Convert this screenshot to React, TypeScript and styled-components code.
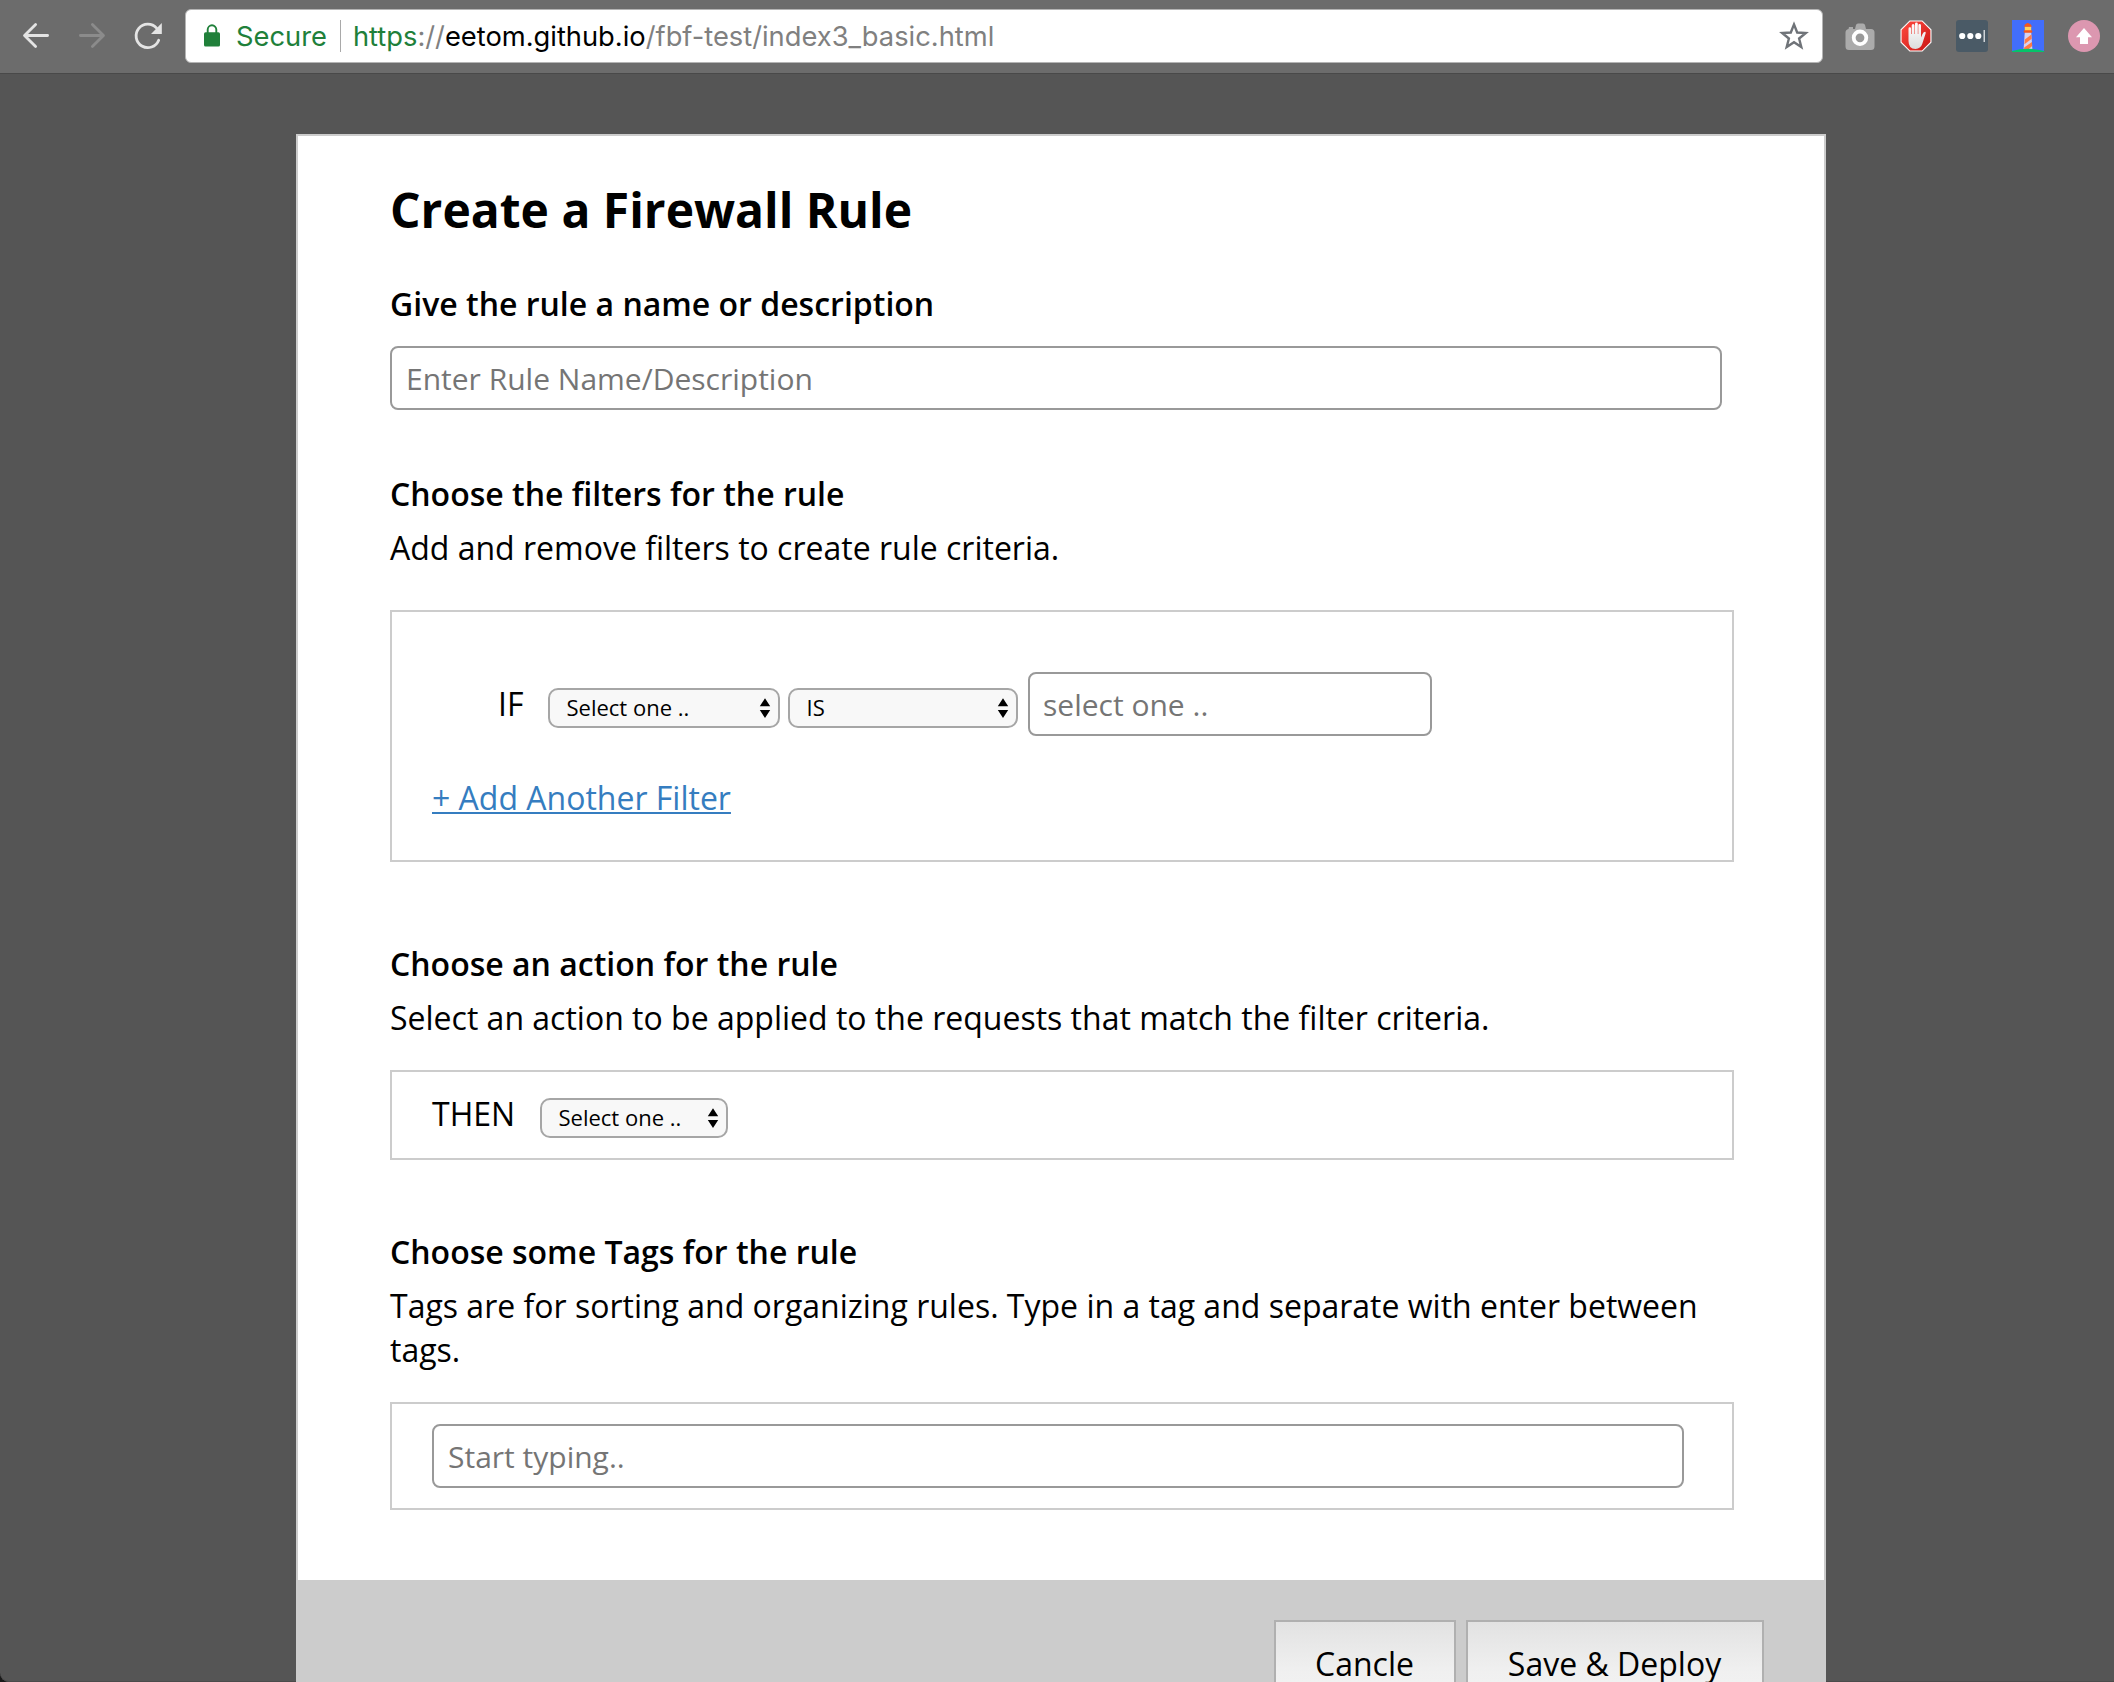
import React from "react";
import styled, { createGlobalStyle } from "styled-components";

const GlobalStyle = createGlobalStyle`
  *, *::before, *::after { box-sizing: border-box; }
  html, body { margin: 0; padding: 0; background: #1a1a1a; }
  body { height: 1682px; overflow: hidden; }
`;

const Window = styled.div`
  width: 2114px;
  height: 1682px;
  display: flex;
  flex-direction: column;
  overflow: hidden;
  background: #555;
  border-radius: 0 0 0 9px;
  box-shadow: inset 0 -1px 0 #4b4b4b;
  font-family: "Open Sans", "Liberation Sans", sans-serif;
  color: #000;
`;

const Toolbar = styled.header`
  flex: none;
  height: 74px;
  display: flex;
  align-items: flex-start;
  background: #6c6c6c;
  border-bottom: 1px solid #494949;
`;

const NavButtons = styled.nav`
  display: flex;
  gap: 24px;
  padding: 20px 20px 0 20px;
  width: 185px;
  svg { display: block; flex: none; }
`;

const Omnibox = styled.div`
  width: 1638px;
  height: 54px;
  margin-top: 9px;
  padding: 0 13px 0 17px;
  display: flex;
  align-items: center;
  background: #fff;
  border: 1px solid #b4b4b4;
  border-radius: 6px;
  font-family: Inter, "Liberation Sans", sans-serif;
  font-size: 27.3px;
  line-height: 34px;
  white-space: nowrap;
`;

const Secure = styled.span`
  margin-left: 15px;
  padding-top: 2px;
  color: #20803a;
`;

const Divider = styled.span`
  width: 1px;
  height: 32px;
  margin: 0 12px 0 13px;
  background: #a9a9a9;
`;

const Url = styled.span`
  flex: 1;
  padding-top: 2px;
  color: #000;
`;

const Scheme = styled.span`
  color: #20803a;
`;

const Muted = styled.span`
  color: #808080;
`;

const Extensions = styled.div`
  display: flex;
  gap: 24px;
  padding: 20px 0 0 21px;
  svg { display: block; flex: none; }
`;

const Page = styled.main`
  flex: 1;
  min-height: 0;
  padding: 60px 0 0 296px;
`;

const Modal = styled.section`
  width: 1530px;
  display: flex;
  flex-direction: column;
  background: #fff;
  border: 2px solid #ccc;
`;

const Body = styled.div`
  height: 1444px;
  padding: 41px 90px 0 92px;
  display: flex;
  flex-direction: column;
`;

const Title = styled.h1`
  margin: 0 0 39px;
  font-size: 48px;
  line-height: 66px;
  font-weight: 700;
`;

const Section = styled.section<{ $after: number }>`
  display: flex;
  flex-direction: column;
  margin-bottom: ${(p) => p.$after}px;
`;

const Heading = styled.h2`
  margin: 0;
  font-size: 32px;
  line-height: 44px;
  font-weight: 600;
`;

const Description = styled.p`
  margin: 10px 0 0;
  font-size: 32px;
  line-height: 44px;
`;

const TextInput = styled.input<{ $width: number; $inset?: number }>`
  width: ${(p) => p.$width}px;
  height: 64px;
  margin: 0;
  padding: 0 ${(p) => p.$inset ?? 14}px;
  border: 2px solid #999;
  border-radius: 8px;
  background: #fff;
  font-family: inherit;
  font-size: 30px;
  color: #000;
  outline: none;
  &::placeholder { color: #757575; opacity: 1; }
`;

const NameInput = styled(TextInput)`
  margin-top: 20px;
`;

const Panel = styled.div<{ $top: number; $height: number }>`
  margin-top: ${(p) => p.$top}px;
  height: ${(p) => p.$height}px;
  padding: 0 40px;
  display: flex;
  flex-direction: column;
  border: 2px solid #ccc;
`;

const FilterRow = styled.div`
  display: flex;
  align-items: center;
  margin-top: 60px;
  padding-left: 66px;
`;

const ActionRow = styled.div`
  display: flex;
  align-items: flex-start;
  margin-top: 20px;
`;

const TagRow = styled.div`
  display: flex;
  margin-top: 20px;
`;

const Keyword = styled.span<{ $width: number }>`
  width: ${(p) => p.$width}px;
  font-size: 32px;
  line-height: 44px;
`;

const SelectBox = styled.span<{ $width: number; $gap: number; $top: number }>`
  position: relative;
  display: block;
  width: ${(p) => p.$width}px;
  height: 40px;
  margin: ${(p) => p.$top}px ${(p) => p.$gap}px 0 0;
`;

const NativeSelect = styled.select`
  appearance: none;
  display: block;
  width: 100%;
  height: 40px;
  margin: 0;
  padding: 0 30px 2px 16.5px;
  border: 2px solid #a6a6a6;
  border-radius: 10px;
  background: #f8f8f8;
  font-family: inherit;
  font-size: 22px;
  color: #000;
`;

const Arrows = styled.svg`
  position: absolute;
  right: 9px;
  top: 10px;
  pointer-events: none;
`;

const AddLink = styled.a`
  align-self: flex-start;
  margin-top: 40px;
  font-size: 32px;
  line-height: 44px;
  color: #357dc0;
  text-decoration: underline;
  text-decoration-thickness: 2px;
  text-underline-offset: 2px;
`;

const Footer = styled.footer`
  height: 120px;
  padding: 40px 60px 0 0;
  display: flex;
  justify-content: flex-end;
  gap: 10px;
  background: #ccc;
`;

const FooterButton = styled.button<{ $width: number }>`
  width: ${(p) => p.$width}px;
  height: 90px;
  margin: 0;
  padding: 20px 1px 0 0;
  display: flex;
  align-items: flex-start;
  justify-content: center;
  border: 2px solid #b0b0b0;
  background: linear-gradient(#e2e2e2, #f0f0f0 50px, #f4f4f4);
  font-family: inherit;
  font-size: 32px;
  line-height: 44px;
  color: #000;
`;

function Select({ width, gap = 0, top, label }: { width: number; gap?: number; top: number; label: string }) {
  return (
    <SelectBox $width={width} $gap={gap} $top={top}>
      <NativeSelect defaultValue={label}>
        <option>{label}</option>
      </NativeSelect>
      <Arrows width="12" height="20" viewBox="0 0 12 20">
        <path d="M6 0.3 11.2 8.3H0.8ZM6 20 0.8 12H11.2Z" fill="#000" />
      </Arrows>
    </SelectBox>
  );
}

function BackIcon() {
  return (
    <svg width="32" height="32" viewBox="0 0 32 32" fill="none" stroke="#e4e4e4" strokeWidth="2.8" strokeLinecap="round" strokeLinejoin="round">
      <path d="M27.6 15.5H4.8M15.6 4.4 4.5 15.5 15.6 26.6" />
    </svg>
  );
}

function ForwardIcon() {
  return (
    <svg width="32" height="32" viewBox="0 0 32 32" fill="none" stroke="#8b8b8b" strokeWidth="2.8" strokeLinecap="round" strokeLinejoin="round">
      <path d="M4.4 15.5H27.2M16.4 4.4 27.5 15.5 16.4 26.6" />
    </svg>
  );
}

function ReloadIcon() {
  return (
    <svg width="32" height="32" viewBox="0 0 32 32">
      <path d="M26.7 20.2A11.7 11.7 0 1 1 24.6 8.2" fill="none" stroke="#e4e4e4" strokeWidth="2.8" strokeLinecap="round" />
      <path d="M29.8 3V14H19Z" fill="#e4e4e4" />
    </svg>
  );
}

function LockIcon() {
  return (
    <svg width="18" height="24" viewBox="0 0 18 24">
      <path d="M4.7 9V5.6a4.3 4.3 0 0 1 8.6 0V9" fill="none" stroke="#20803a" strokeWidth="1.9" />
      <rect x="1" y="8.3" width="16" height="14.2" rx="1.6" fill="#20803a" />
    </svg>
  );
}

function StarIcon() {
  return (
    <svg width="30" height="30" viewBox="0 0 30 30">
      <path d="M15 3.4 18.2 11.5 26.8 12 20.1 17.5 22.3 26 15 21.2 7.7 26 9.9 17.5 3.2 12 11.8 11.5Z" fill="none" stroke="#6f7378" strokeWidth="2.4" />
    </svg>
  );
}

function CameraIcon() {
  return (
    <svg width="32" height="32" viewBox="0 0 32 32">
      <path d="M5 7h4v2h2l1-4q.4-1.500 2-1.500h5q1.600 0 2 1.500l1 4h5q3.500 0 3.500 3.500v14q0 3.500-3.500 3.500H5q-3.500 0-3.500-3.500V12.500Q1.500 9.500 4.500 9Z" fill="#ababab" />
      <circle cx="16" cy="17.800" r="6.300" fill="#999" stroke="#fff" strokeWidth="3.800" />
    </svg>
  );
}

function StopHandIcon() {
  return (
    <svg width="32" height="32" viewBox="0 0 32 32">
      <defs>
        <linearGradient id="stop" x1="0" y1="0" x2="1" y2="1">
          <stop offset="0" stopColor="#ff4b41" />
          <stop offset="1" stopColor="#c91612" />
        </linearGradient>
        <linearGradient id="palm" x1="0" y1="0" x2="0" y2="1">
          <stop offset="0" stopColor="#fff" />
          <stop offset="1" stopColor="#dcdcdc" />
        </linearGradient>
      </defs>
      <path d="M9.600.500H22.400L31.500 9.600V22.400L22.400 31.500H9.600L.500 22.400V9.600Z" fill="#fff" />
      <path d="M10 1.600H22L30.400 10V22L22 30.400H10L1.600 22V10Z" fill="url(#stop)" />
      <path d="M8.500 21V8.700q0-1.400 1.300-1.400t1.300 1.400V14l.600 0V5.500q0-1.500 1.400-1.500t1.400 1.500V14h.500V4q0-1.400 1.400-1.400T17.800 4V14h.5V5.500q0-1.400 1.300-1.400T21 5.500V17.500l1.500-3.500q1.200-2.300 2.700-2.200.8.200.4 1.600l-3.300 10.400Q20.600 28.900 15.500 28.900 8.500 28.900 8.500 21Z" fill="url(#palm)" />
    </svg>
  );
}

function PasswordIcon() {
  return (
    <svg width="32" height="32" viewBox="0 0 32 32">
      <rect width="32" height="32" rx="3" fill="#4a5a66" />
      <circle cx="6.200" cy="16" r="3.100" fill="#fff" />
      <circle cx="14.300" cy="16" r="3.100" fill="#fff" />
      <circle cx="22.300" cy="16" r="3.100" fill="#fff" />
      <rect x="27.500" y="10" width="1.500" height="12" fill="#cfd4d8" />
    </svg>
  );
}

function LighthouseIcon() {
  return (
    <svg width="32" height="32" viewBox="0 0 32 32">
      <rect width="32" height="32" fill="#426efb" />
      <path d="M12.800 12h6.400l1.200 17.500h-8.800Z" fill="#d6d2ee" />
      <path d="M12.900 19.500 19.400 14.500l.3 4.300-7.300 5.400ZM12.200 27.500l7.700-5.600.3 4.200-4 3.400h-4.200Z" fill="#ff7a45" />
      <rect x="12.800" y="6.500" width="6.400" height="4.500" fill="#ffd35c" />
      <path d="M12 6.800q.4-2.600 2.800-3.500.8-.7 1.900 0 2.600.9 3.300 3.500Z" fill="#f4581c" />
      <rect x="11.700" y="10.200" width="8.600" height="2.500" rx="1" fill="#f4581c" />
      <path d="M0 32V31Q16 26.500 32 31v1Z" fill="#05c469" />
    </svg>
  );
}

function UploadIcon() {
  return (
    <svg width="32" height="32" viewBox="0 0 32 32">
      <circle cx="16" cy="16" r="16" fill="#dc97b0" />
      <path d="M16 8 24 17.300H20V24H12V17.300H8Z" fill="#fff" />
    </svg>
  );
}

export default function App() {
  return (
    <>
      <GlobalStyle />
      <Window>
        <Toolbar>
          <NavButtons>
            <BackIcon />
            <ForwardIcon />
            <ReloadIcon />
          </NavButtons>
          <Omnibox>
            <LockIcon />
            <Secure>Secure</Secure>
            <Divider />
            <Url>
              <Scheme>https</Scheme>
              <Muted>://</Muted>
              eetom.github.io
              <Muted>/fbf-test/index3_basic.html</Muted>
            </Url>
            <StarIcon />
          </Omnibox>
          <Extensions>
            <CameraIcon />
            <StopHandIcon />
            <PasswordIcon />
            <LighthouseIcon />
            <UploadIcon />
          </Extensions>
        </Toolbar>
        <Page>
          <Modal>
            <Body>
              <Title>Create a Firewall Rule</Title>
              <Section $after={62}>
                <Heading>Give the rule a name or description</Heading>
                <NameInput $width={1332} placeholder="Enter Rule Name/Description" />
              </Section>
              <Section $after={80}>
                <Heading>Choose the filters for the rule</Heading>
                <Description>Add and remove filters to create rule criteria.</Description>
                <Panel $top={40} $height={252}>
                  <FilterRow>
                    <Keyword $width={50}>IF</Keyword>
                    <Select width={232} gap={8} top={8} label="Select one .." />
                    <Select width={230} gap={10} top={8} label="IS" />
                    <TextInput $width={404} $inset={13} placeholder="select one .." />
                  </FilterRow>
                  <AddLink href="#">+ Add Another Filter</AddLink>
                </Panel>
              </Section>
              <Section $after={70}>
                <Heading>Choose an action for the rule</Heading>
                <Description>
                  Select an action to be applied to the requests that match the filter criteria.
                </Description>
                <Panel $top={30} $height={90}>
                  <ActionRow>
                    <Keyword $width={108}>THEN</Keyword>
                    <Select width={188} top={6} label="Select one .." />
                  </ActionRow>
                </Panel>
              </Section>
              <Section $after={0}>
                <Heading>Choose some Tags for the rule</Heading>
                <Description>
                  Tags are for sorting and organizing rules. Type in a tag and separate with enter between tags.
                </Description>
                <Panel $top={30} $height={108}>
                  <TagRow>
                    <TextInput $width={1252} placeholder="Start typing.." />
                  </TagRow>
                </Panel>
              </Section>
            </Body>
            <Footer>
              <FooterButton $width={182}>Cancle</FooterButton>
              <FooterButton $width={298}>Save &amp; Deploy</FooterButton>
            </Footer>
          </Modal>
        </Page>
      </Window>
    </>
  );
}
